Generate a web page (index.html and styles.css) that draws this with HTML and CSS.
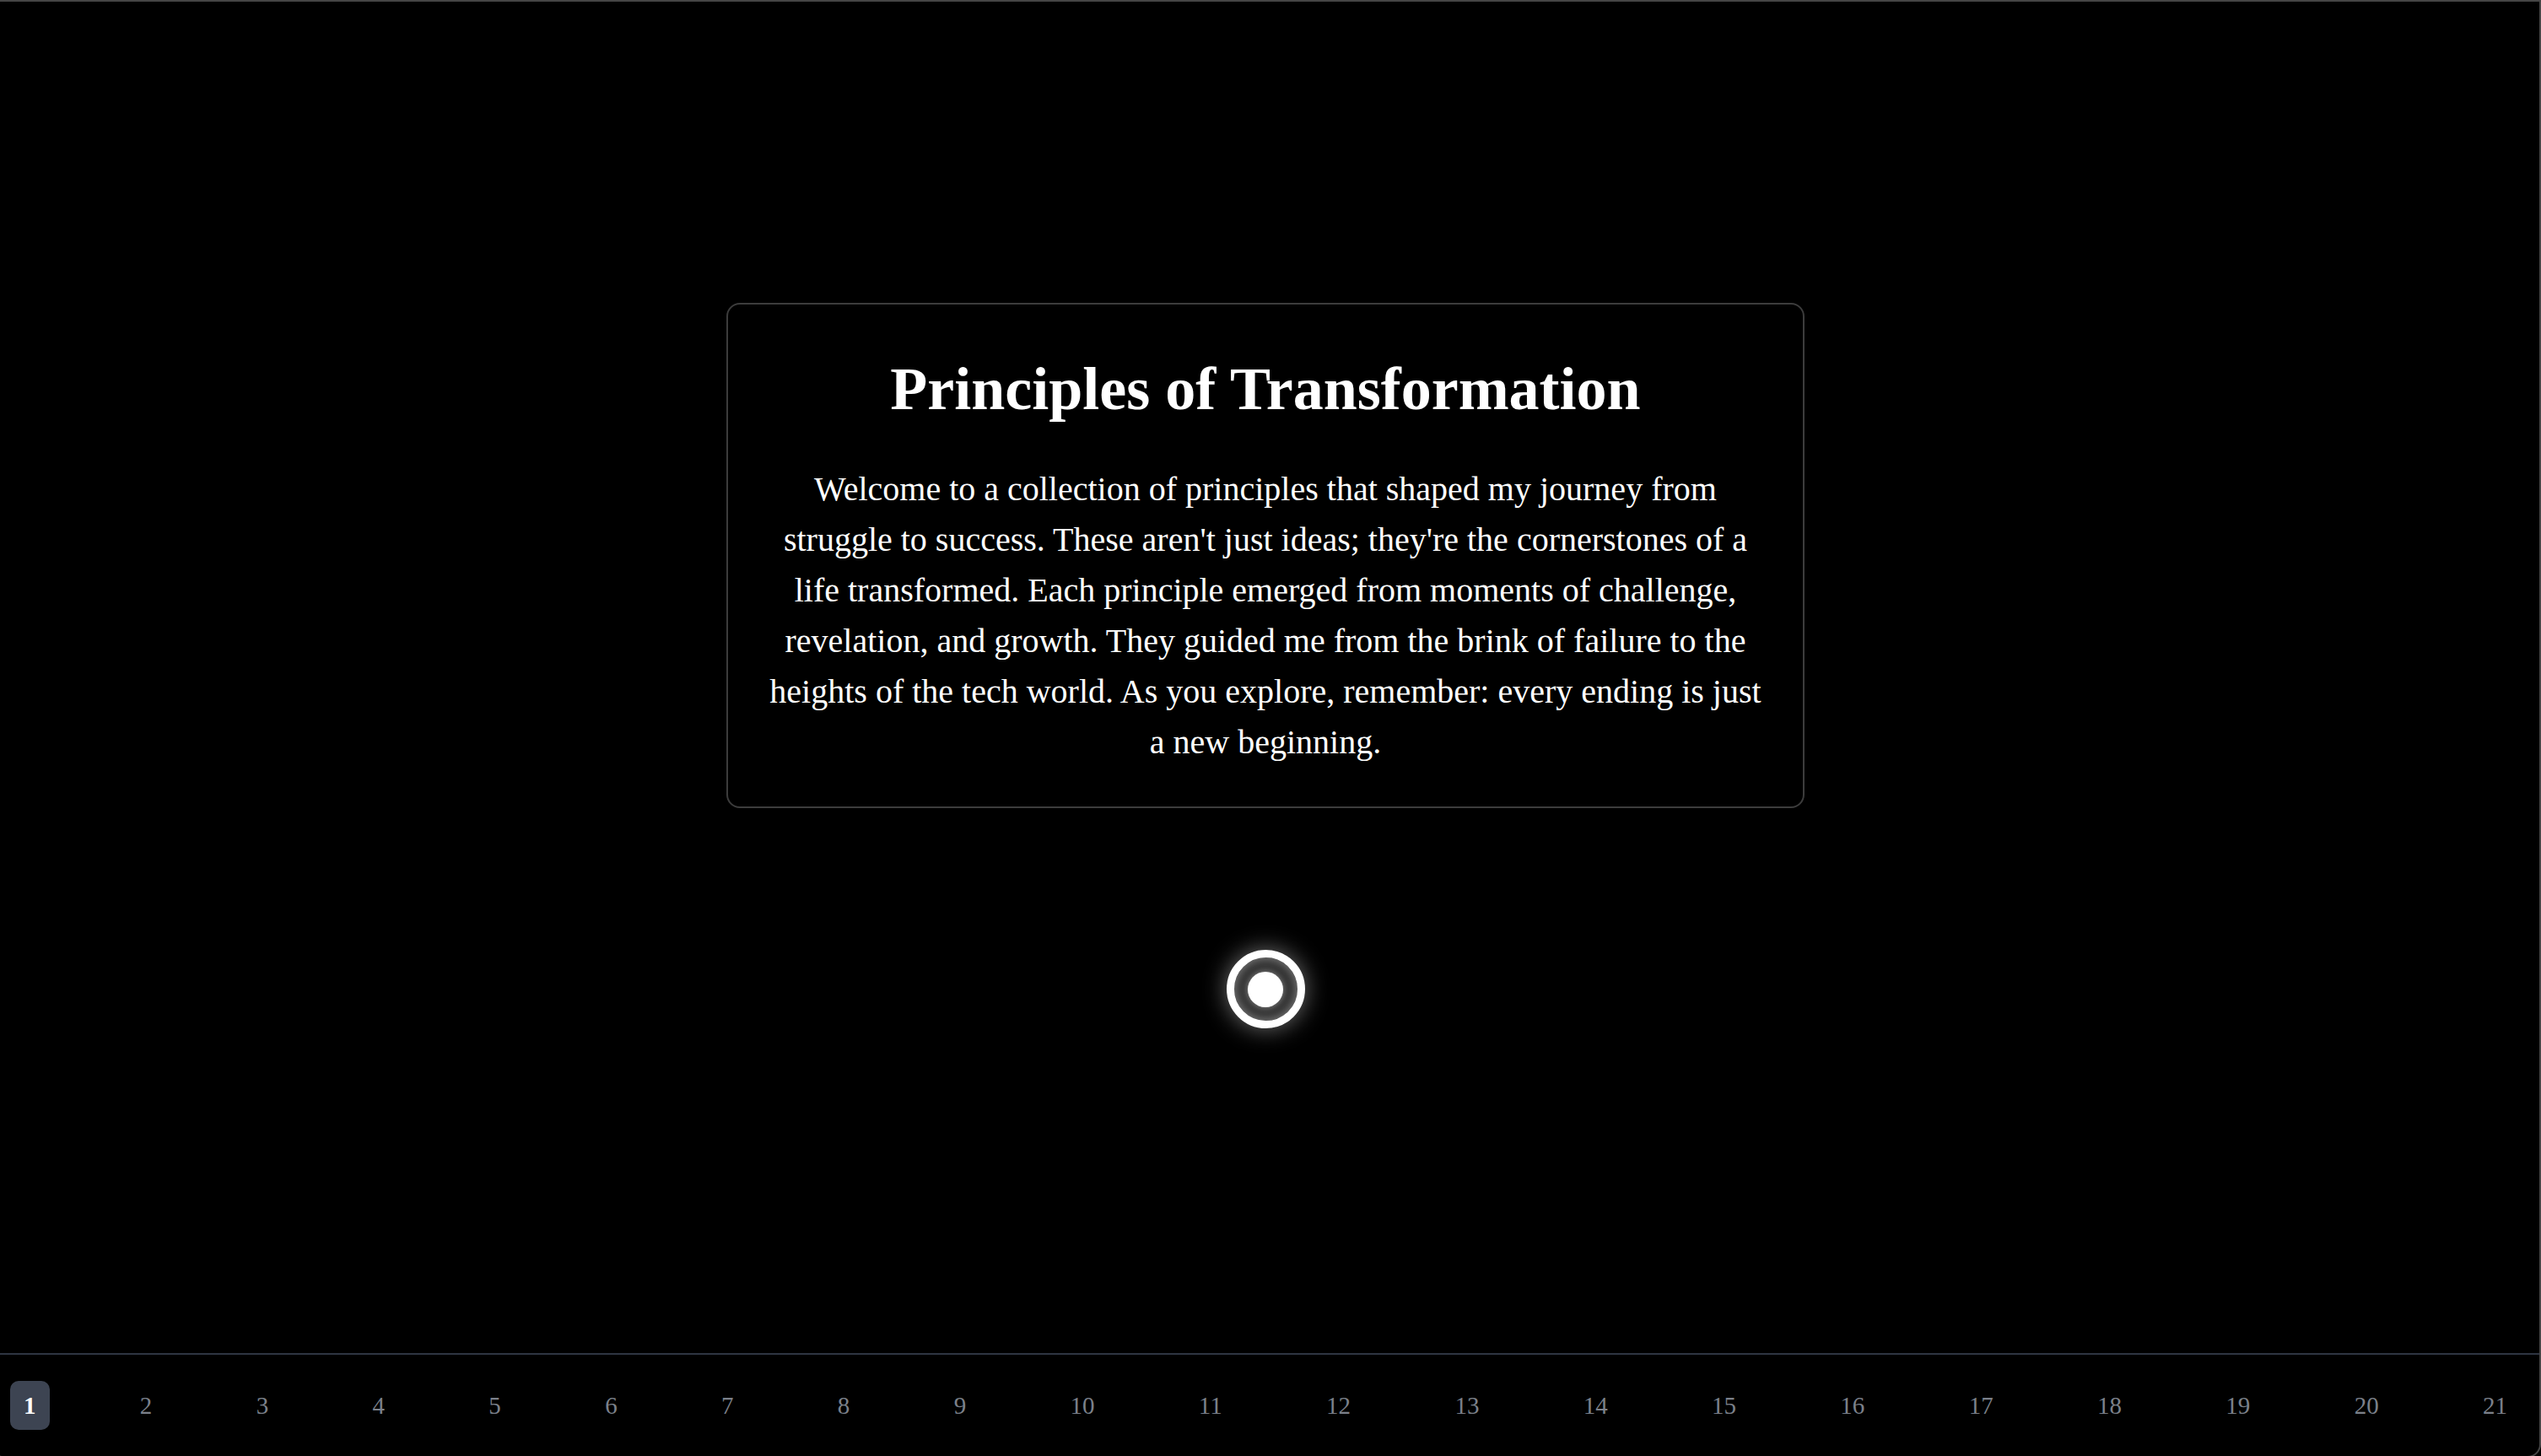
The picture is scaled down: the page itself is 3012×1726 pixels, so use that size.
FILE: index.html
```html
<!DOCTYPE html>
<html lang="en">
<head>
<meta charset="utf-8">
<title>Principles of Transformation</title>
<link rel="stylesheet" href="styles.css">
</head>
<body>
<div class="frame">
  <main class="stage">
    <section class="card">
      <h1 class="card-title">Principles of Transformation</h1>
      <p class="card-text">Welcome to a collection of principles that shaped my journey from struggle to success. These aren't just ideas; they're the cornerstones of a life transformed. Each principle emerged from moments of challenge, revelation, and growth. They guided me from the brink of failure to the heights of the tech world. As you explore, remember: every ending is just a new beginning.</p>
    </section>
    <div class="orb"><div class="orb-core"></div></div>
  </main>
  <nav class="pager">
    <span class="page active">1</span>
    <span class="page">2</span>
    <span class="page">3</span>
    <span class="page">4</span>
    <span class="page">5</span>
    <span class="page">6</span>
    <span class="page">7</span>
    <span class="page">8</span>
    <span class="page">9</span>
    <span class="page">10</span>
    <span class="page">11</span>
    <span class="page">12</span>
    <span class="page">13</span>
    <span class="page">14</span>
    <span class="page">15</span>
    <span class="page">16</span>
    <span class="page">17</span>
    <span class="page">18</span>
    <span class="page">19</span>
    <span class="page">20</span>
    <span class="page">21</span>
  </nav>
</div>
</body>
</html>
```

FILE: styles.css
```css
html, body {
  margin: 0;
  padding: 0;
  background: #000;
  overflow: hidden;
}

body {
  font-family: "Liberation Serif", "Times New Roman", serif;
  color: #fff;
}

.frame {
  box-sizing: border-box;
  margin-left: -12px;
  height: 1728px;
  border: 2px solid #454545;
  border-radius: 0 0 16px 16px;
  display: flex;
  flex-direction: column;
  background: #000;
}

.stage {
  flex: 1;
  display: flex;
  flex-direction: column;
  align-items: center;
  justify-content: center;
  gap: 168px;
  padding-bottom: 28px;
}

.card {
  box-sizing: border-box;
  width: 1278px;
  border: 2px solid #3c3c3c;
  border-radius: 16px;
  padding: 57px 44px 46px;
  text-align: center;
}

.card-title {
  margin: 0 0 46px;
  font-size: 72px;
  font-weight: 700;
  line-height: 1.2;
}

.card-text {
  margin: 0;
  font-size: 40px;
  line-height: 60px;
}

.orb {
  box-sizing: border-box;
  width: 93px;
  height: 93px;
  border: 9px solid #fff;
  border-radius: 50%;
  display: flex;
  align-items: center;
  justify-content: center;
  box-shadow: 0 0 28px rgba(255, 255, 255, 0.45), inset 0 0 14px rgba(255, 255, 255, 0.45);
  background: rgba(255, 255, 255, 0.18);
}

.orb-core {
  width: 42px;
  height: 42px;
  border-radius: 50%;
  background: #fff;
  box-shadow: 0 0 8px rgba(255, 255, 255, 0.5);
}

.pager {
  height: 122px;
  box-sizing: border-box;
  border-top: 2px solid #2e3542;
  display: flex;
  align-items: center;
  justify-content: space-between;
  padding: 0 22px 0 22px;
}

.page {
  padding: 12px 16px;
  font-size: 29px;
  line-height: 34px;
  color: #7b808a;
  border-radius: 10px;
}

.page.active {
  background: #3d4452;
  color: #fff;
  font-weight: 700;
}
```
